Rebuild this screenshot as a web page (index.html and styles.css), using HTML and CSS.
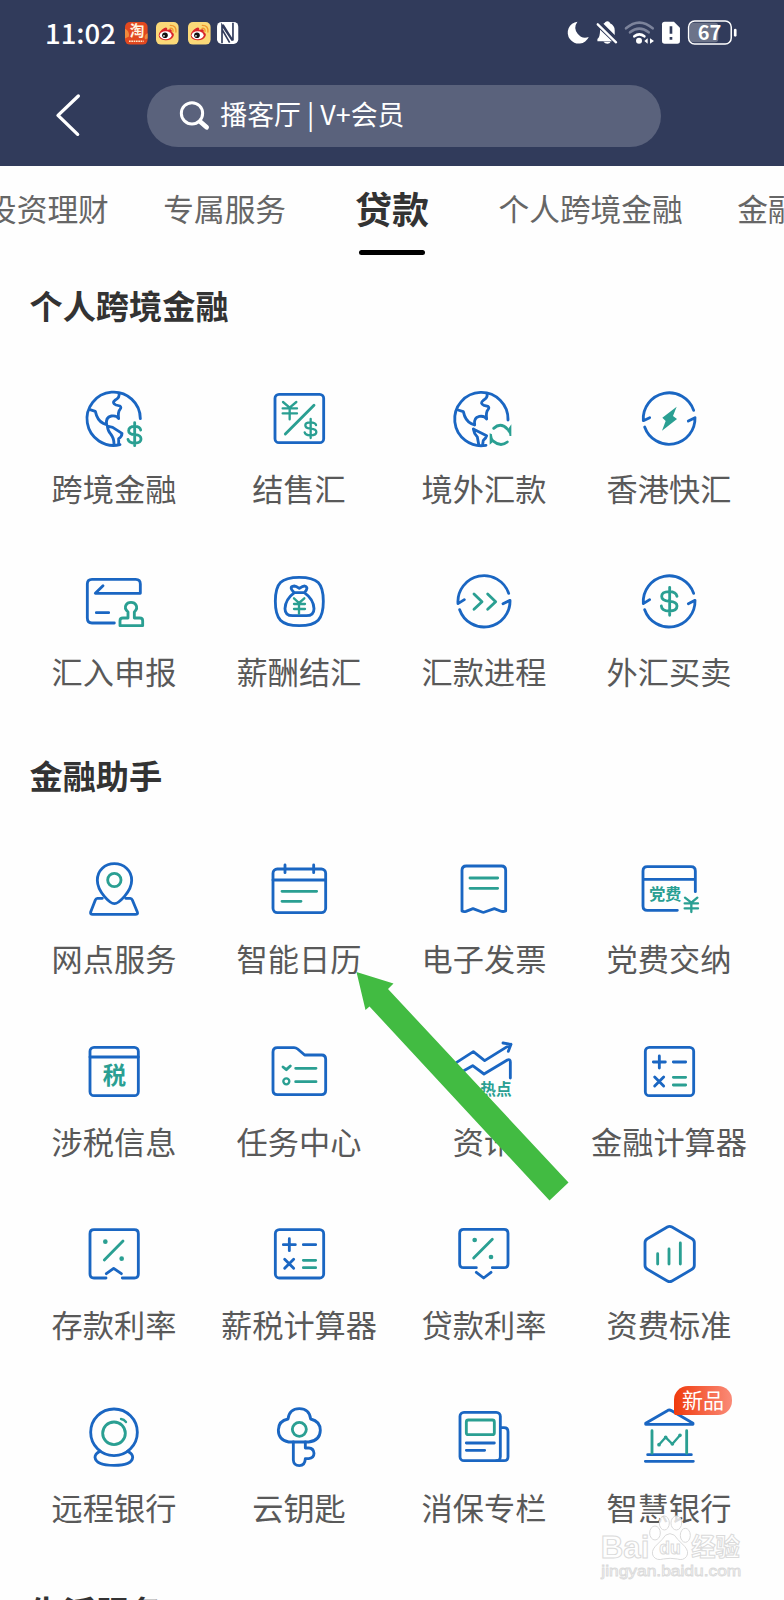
FILE: index.html
```
<!DOCTYPE html>
<html lang="zh-CN">
	<head>
		<meta charset="UTF-8">
		<title>全部服务</title>
		<link rel="stylesheet" href="styles.css">
	</head>
	<body>
		<div id="header">
			<div class="status">
				<span class="time">11:02</span>
				<svg class="app" viewBox="0 0 68 68">
					<rect width="68" height="68" rx="15" fill="#e2481f"/>
					<path d="M0 20 Q14 26 12 44 L0 50z M68 34 Q56 40 60 52 L68 50z" fill="#f08a3c"/>
					<text x="36" y="43" font-size="44" class="tao">淘</text>
					<path d="M12 58h44" stroke="#ffe9c9" stroke-width="5" stroke-dasharray="5 2"/>
				</svg>
				<svg class="app" viewBox="0 0 68 68">
					<rect width="68" height="68" rx="15" fill="#fbd978"/>
					<path d="M8 40 Q10 26 25 18 Q35 14 34 24 Q50 18 47 30 Q56 34 53 42 Q46 56 28 55 Q9 53 8 40z" fill="#d9252a"/>
					<ellipse cx="29" cy="40" rx="18" ry="12" fill="#fff"/>
					<circle cx="27" cy="40" r="8.500" fill="#111"/>
					<circle cx="24" cy="42" r="2.500" fill="#fff"/>
					<path d="M43 10 Q62 10 60 30 M42 19 Q53 18 51 28" fill="none" stroke="#f0962c" stroke-width="4" stroke-linecap="round"/>
				</svg>
				<svg class="app" viewBox="0 0 68 68">
					<rect width="68" height="68" rx="15" fill="#fbd978"/>
					<path d="M8 40 Q10 26 25 18 Q35 14 34 24 Q50 18 47 30 Q56 34 53 42 Q46 56 28 55 Q9 53 8 40z" fill="#d9252a"/>
					<ellipse cx="29" cy="40" rx="18" ry="12" fill="#fff"/>
					<circle cx="27" cy="40" r="8.500" fill="#111"/>
					<circle cx="24" cy="42" r="2.500" fill="#fff"/>
					<path d="M43 10 Q62 10 60 30 M42 19 Q53 18 51 28" fill="none" stroke="#f0962c" stroke-width="4" stroke-linecap="round"/>
				</svg>
				<svg class="nfc" viewBox="0 0 64 68">
					<rect width="64" height="66" rx="14" fill="#fff"/>
					<path d="M15 64V10L46 56M48 2V56M18 8L48 56M15 22L38 62" fill="none" stroke="#313b5b" stroke-width="5"/>
				</svg>
				<svg class="signals" viewBox="522 58 516 82">
					<path d="M556 66a33 33 0 1 0 34 46a30 30 0 0 1-34-46z" fill="#fff"/>
					<path d="M616 125V118Q624 112 624 90L660 125zM634 72Q638 70 640 67Q646 62 652 67L654 71Q668 78 668 92V106zM634 126h22q-3 6-10 6t-12-6z" fill="#fff"/>
					<path d="M617 74L672 128" stroke="#fff" stroke-width="7" stroke-linecap="round"/>
					<g fill="none" stroke-width="8" stroke-linecap="round">
						<path d="M702 86Q742 52 782 86M714 98Q742 76 770 98" stroke="#7c839b"/>
						<path d="M727 110Q742 98 757 110" stroke="#fff"/>
					</g>
					<circle cx="741" cy="123" r="9" fill="#fff"/>
					<path d="M757 124l10-8v16zM786 124l-12-8v16z" fill="#fff"/>
					<path d="M818 66h28l18 18v40q0 8-8 8h-38q-8 0-8-8V74q0-8 8-8z" fill="#fff"/>
					<path d="M837 80v22M837 112v8" stroke="#313b5b" stroke-width="8"/>
					<rect x="894" y="69" width="85" height="59" rx="10" fill="#6c7389"/>
					<rect x="890" y="64" width="128" height="69" rx="18" fill="none" stroke="#fff" stroke-width="4.500"/>
					<path d="M1030 91v16" stroke="#fff" stroke-width="8" stroke-linecap="round"/>
					<text x="953" y="122" class="percent">67</text>
				</svg>
			</div>
			<div class="nav">
				<svg class="back" viewBox="160 276 84 138"><path d="M233 288L172 346L231 403"/></svg>
				<div class="search">
					<svg viewBox="534 298 100 96"><circle cx="573" cy="338" r="32"/><path d="M598 363L617 380" stroke-width="14"/></svg>
					<span>播客厅 | V+会员</span>
				</div>
			</div>
		</div>
		<div id="tabs">
			<span>投资理财</span>
			<span>专属服务</span>
			<span class="on">贷款</span>
			<span>个人跨境金融</span>
			<span>金融助手</span>
		</div>

		<div class="section">
			<h2>个人跨境金融</h2>
			<ul>
				<li>
					<svg viewBox="114 39 216 216">
						<path d="M301 146A80 80 0 1 0 240 224"/>
						<path d="M237 70Q240 82 226 90Q214 99 228 105L240 108Q245 112 240 118Q233 126 236 146Q231 136 214 138Q196 142 200 164L190 160Q172 152 166 124L150 119M202 168L218 172L246 190Q246 200 236 206V222M202 168Q204 184 212 192Q222 204 222 222"/>
						<path class="g" d="M302 180Q300 169 285 169Q266 169 266 182Q266 193 285 194Q303 195 303 207Q303 219 285 219Q267 219 264 208M284 158V227"/>
					</svg>
					<p>跨境金融</p>
				</li>
				<li>
					<svg viewBox="669 39 216 216">
						<rect x="705" y="73" width="146" height="145" rx="12"/>
						<path class="g" d="M822 106L736 192"/>
						<path class="g thin" d="M729 96L749 113L769 96M728 115H771M728 130H771M749 113V148M828 165Q826 157 811 157Q796 157 796 166Q796 175 811 176Q829 177 829 186Q829 196 811 196Q796 196 794 187M812 147V204"/>
					</svg>
					<p>结售汇</p>
				</li>
				<li>
					<svg viewBox="144 39 216 216">
						<g transform="translate(24 1)">
							<path d="M300 149A80 80 0 1 0 234 225"/>
							<path d="M237 70Q240 82 226 90Q214 99 228 105L240 108Q245 112 240 118Q233 126 236 146Q231 136 214 138Q196 142 200 164L190 160Q172 152 166 124L150 119M196 176L206 181L236 196Q234 204 226 210L224 222M196 176Q198 190 208 200L212 222"/>
						</g>
						<path class="g" d="M281 175Q302 156 322 177M322 216Q302 232 281 214"/>
						<path class="gf" d="M334 163V198H328Q330 191 321 182zM269 190V224L283 212Q275 202 276 193z"/>
					</svg>
					<p>境外汇款</p>
				</li>
				<li>
					<svg viewBox="699 39 216 216">
						<path d="M881 121A77.700 77.700 0 0 0 730 152L749 143M734 171A77.700 77.700 0 0 0 885 143L865 153"/>
						<path class="gf" d="M830 110L787 143L797 153L786 182L831 147L819 138z"/>
					</svg>
					<p>香港快汇</p>
				</li>
				<li>
					<svg viewBox="114 588 216 216">
						<path d="M189 647L166 670H301V642Q301 628 287 628H156Q142 628 142 642V744Q142 759 156 759H223M169 728H206"/>
						<path class="g" d="M264 744V726Q252 715 258 705Q262 697 273 697Q284 697 288 705Q294 715 283 726V744H299Q308 744 308 752V767H240V752Q240 744 249 744H264z"/>
					</svg>
					<p>汇入申报</p>
				</li>
				<li>
					<svg viewBox="669 588 216 216">
						<path d="M778 622C833 622 850 640 850 694S833 767 778 767S706 748 706 694S723 622 778 622z"/>
						<path d="M763 668Q736 688 735 716Q735 737 758 737H799Q822 737 822 716Q821 688 793 668zM763 668Q744 650 763 648Q768 648 778 655Q788 648 794 648Q808 652 793 668"/>
						<path class="g thin" d="M762 685L777 699L793 685M762 702H795M762 717H795M777 699V731"/>
					</svg>
					<p>薪酬结汇</p>
				</li>
				<li>
					<svg viewBox="144 588 216 216">
						<path d="M326 670A78.200 78.200 0 0 0 174 701L193 689M179 719A77.700 77.700 0 0 0 330 691L309 701"/>
						<path class="g" d="M222 672L246 695L222 718M263 672L287 695L263 718"/>
					</svg>
					<p>汇款进程</p>
				</li>
				<li>
					<svg viewBox="699 588 216 216">
						<path d="M881 670A77.700 77.700 0 0 0 730 701L749 689M734 719A77.700 77.700 0 0 0 885 691L865 701"/>
						<path class="g" d="M831 679Q828 665 808 665Q785 665 785 679Q785 693 808 694Q831 695 831 708Q831 723 808 723Q785 723 784 708M809 652V736"/>
					</svg>
					<p>外汇买卖</p>
				</li>
			</ul>
		</div>

		<div class="section">
			<h2>金融助手</h2>
			<ul>
				<li>
					<svg viewBox="114 39 216 216">
						<path d="M223 191C211 191 172 156 172 121C172 91 195 71 223 71S275 91 275 121C275 156 235 191 223 191z"/>
						<path d="M187 175H172Q168 175 166 180L152 216Q150 223 158 223H286Q295 223 292 216L277 180Q275 175 271 175H257"/>
						<circle class="g" cx="223" cy="120" r="20"/>
					</svg>
					<p>网点服务</p>
				</li>
				<li>
					<svg viewBox="669 39 216 216">
						<rect x="699" y="87" width="158" height="131" rx="13"/>
						<path d="M699 120H857M735 75V98M821 75V98"/>
						<path class="g" d="M726 154H830M726 184H783"/>
					</svg>
					<p>智能日历</p>
				</li>
				<li>
					<svg viewBox="144 39 216 216">
						<path d="M186 213V91Q186 78 199 78H304Q317 78 317 91V213Q309 216 301 213L283 206L254 216Q250 218 246 216L219 206L198 214Q191 216 186 213z"/>
						<path class="g" d="M210 114H293M210 145H293"/>
					</svg>
					<p>电子发票</p>
				</li>
				<li>
					<svg viewBox="699 39 216 216">
						<path d="M886 155V93Q886 80 873 80H742Q729 80 729 93V198Q729 211 742 211H832M729 118H886"/>
						<text x="796" y="181" font-size="48">党费</text>
						<path class="g thin" d="M855 173L874 188L892 173M854 190H894M854 205H894M874 188V216"/>
					</svg>
					<p>党费交纳</p>
				</li>
				<li>
					<svg viewBox="114 588 216 216">
						<rect x="150" y="622" width="145" height="145" rx="12"/>
						<path d="M150 651H295"/>
						<text x="223" y="732" font-size="70">税</text>
					</svg>
					<p>涉税信息</p>
				</li>
				<li>
					<svg viewBox="669 588 216 216">
						<path d="M712 623H762Q768 623 773 627L794 645H845Q857 645 857 658V751Q857 764 844 764H712Q699 764 699 751V636Q699 623 712 623z"/>
						<path class="g" d="M729 681L739 689L751 678M767 685H828M767 725H828"/>
						<circle class="g thin" cx="739" cy="724" r="9"/>
					</svg>
					<p>任务中心</p>
				</li>
				<li>
					<svg viewBox="144 588 216 216">
						<path d="M170 667L220 635L254 662L333 613M309 609L333 613L325 634M170 704L218 677L252 702L322 660Q331 656 331 666V714"/>
						<text x="288" y="764" font-size="47">热点</text>
					</svg>
					<p>资讯</p>
				</li>
				<li>
					<svg viewBox="699 588 216 216">
						<rect x="736" y="622" width="145" height="145" rx="12"/>
						<path d="M760 666H796M778 648V684M820 666H857M764 711L791 738M791 711L764 738"/>
						<path class="g" d="M820 712H857M820 735H857"/>
					</svg>
					<p>金融计算器</p>
				</li>
				<li>
					<svg viewBox="114 57 216 216">
						<path d="M198 234H162Q150 234 150 222V101Q150 89 162 89H283Q295 89 295 101V222Q295 234 283 234H247M199 221L221 205L244 221"/>
						<path class="g" d="M249 123L193 180"/>
						<circle class="gf" cx="196" cy="125" r="7"/><circle class="gf" cx="245" cy="176" r="7"/>
					</svg>
					<p>存款利率</p>
				</li>
				<li>
					<svg viewBox="669 57 216 216">
						<rect x="706" y="89" width="145" height="145" rx="12"/>
						<path d="M730 134H766M748 116V152M790 134H827M734 178L761 205M761 178L734 205"/>
						<path class="g" d="M790 181H827M790 203H827"/>
					</svg>
					<p>薪税计算器</p>
				</li>
				<li>
					<svg viewBox="144 57 216 216">
						<path d="M229 203H191Q179 203 179 191V100Q179 88 191 88H312Q324 88 324 100V191Q324 203 312 203H277M229 217L251 234L273 217"/>
						<path class="g" d="M277 118L221 174"/>
						<circle class="gf" cx="224" cy="120" r="7"/><circle class="gf" cx="273" cy="171" r="7"/>
					</svg>
					<p>贷款利率</p>
				</li>
				<li>
					<svg viewBox="699 57 216 216">
						<path d="M802 81Q809 77 816 81L876 116Q883 120 883 128V196Q883 204 876 208L816 243Q809 247 802 243L742 208Q735 204 735 196V128Q735 120 742 116z"/>
						<path class="g" d="M773 161V192M807 147V192M841 129V192"/>
					</svg>
					<p>资费标准</p>
				</li>
				<li>
					<svg viewBox="114 606 216 216">
						<circle cx="222" cy="697" r="70"/>
						<path d="M180 754Q165 762 165 772Q168 796 222 796Q276 796 278 772Q278 762 263 754"/>
						<circle class="g" cx="222" cy="700" r="34"/>
						<path class="g thin" d="M243 657Q252 658 258 666"/>
					</svg>
					<p>远程银行</p>
				</li>
				<li>
					<svg viewBox="669 606 216 216">
						<path d="M746 726Q715 720 715 690Q716 662 744 657Q748 626 778 626Q808 626 812 657Q841 664 841 691Q840 722 806 726z"/>
						<path d="M760 726V780Q761 797 778 797Q795 797 796 776H806Q822 774 822 760Q821 745 806 744H796V726"/>
						<circle class="g" cx="778" cy="688" r="21"/>
					</svg>
					<p>云钥匙</p>
				</li>
				<li>
					<svg viewBox="144 606 216 216">
						<rect x="180" y="637" width="121" height="145" rx="12"/>
						<path d="M301 683H312Q324 683 324 695V770Q324 782 312 782H290M199 729H283M199 751H254"/>
						<rect class="g" x="199" y="660" width="84" height="44" rx="6"/>
					</svg>
					<p>消保专栏</p>
				</li>
				<li>
					<svg viewBox="699 606 216 216">
						<path d="M737 670L802 632Q808 628 815 632L879 670V673H737zM743 764H874M736 784H880"/>
						<path class="g" d="M756 692V760M860 692V760"/>
						<path class="g thin" d="M777 734L797 712L817 732L840 706"/>
						<path class="g dots" d="M777 734h.1M797 712h.1M817 732h.1M840 706h.1"/>
					</svg>
					<em>新品</em>
					<p>智慧银行</p>
				</li>
			</ul>
		</div>

		<div class="section">
			<h2>生活服务</h2>
		</div>

		<svg id="arrow" viewBox="356 972 214 230"><path d="M356.500 972L393.500 983.500L388 989L568.500 1182.500L549.500 1200.500L369.500 1006.500L365.500 1010z"/></svg>

		<svg id="mark" viewBox="600 940 430 214">
			<text x="602" y="1076" font-size="92" textLength="146" lengthAdjust="spacingAndGlyphs">Bai</text>
			<g>
				<ellipse cx="765" cy="1000" rx="16" ry="21"/>
				<ellipse cx="793" cy="970" rx="15" ry="21"/>
				<ellipse cx="829" cy="970" rx="16" ry="21"/>
				<ellipse cx="856" cy="1007" rx="15" ry="21"/>
				<path d="M810 1002Q824 1002 834 1020L854 1040Q868 1056 860 1070Q850 1084 832 1078Q810 1074 790 1078Q770 1084 760 1070Q752 1056 766 1040L786 1020Q796 1002 810 1002z"/>
			</g>
			<text x="778" y="1064" font-size="56" textLength="64" lengthAdjust="spacingAndGlyphs">du</text>
			<text x="874" y="1070" font-size="74" textLength="146" lengthAdjust="spacingAndGlyphs">经验</text>
			<text x="604" y="1130" font-size="44" textLength="420" lengthAdjust="spacingAndGlyphs" class="url">jingyan.baidu.com</text>
		</svg>
	</body>
</html>
```
FILE: styles.css
```
* {margin: 0; padding: 0; box-sizing: border-box;}
ul, li {list-style: none;}
body {
	position: relative;
	height: 1600px;
	overflow: hidden;
	background: #fefefe;
	font-family: "Noto Sans CJK SC", sans-serif;
}

/* 顶部 */
#header {
	height: 166px;
	background: #313b5b;
	color: #fff;
}
#header .status {
	display: flex;
	align-items: center;
	height: 66px;
	padding-left: 45px;
}
#header .status svg {overflow: visible;}
#header .time {
	width: 80px;
	padding-bottom: 2px;
	font-size: 27.500px;
	font-weight: 500;
	line-height: 40px;
}
#header .app {
	width: 22.6px; height: 22.6px;
	margin-right: 8.8px;
}
#header .nfc {
	width: 21.300px; height: 22.6px;
	margin-left: -2px;
}
#header .signals {
	width: 172px; height: 27.300px;
	margin-left: auto;
	margin-right: 46px;
}
.tao {
	fill: #fff3e0;
	font-weight: 700;
	text-anchor: middle;
}
.percent {
	fill: #fff;
	font: 700 60px "Noto Sans CJK SC", sans-serif;
	text-anchor: middle;
}
#header .nav {
	display: flex;
	align-items: center;
	height: 62px;
	margin-top: 19px;
	padding-left: 54px;
}
#header .back {
	width: 28px; height: 46px;
	margin-bottom: 2px;
	fill: none;
	stroke: #fff;
	stroke-width: 10;
	stroke-linecap: round;
	stroke-linejoin: round;
}
#header .search {
	display: flex;
	align-items: center;
	width: 514px; height: 62px;
	margin-left: 65px;
	padding-left: 32px;
	border-radius: 31px;
	background: #5a627c;
	font-size: 26.900px;
	white-space: pre;
}
#header .search svg {
	width: 33.300px; height: 32px;
	margin-right: 8px;
	fill: none;
	stroke: #fff;
	stroke-width: 9;
	stroke-linecap: round;
}
#header .search span {
	padding-bottom: 4px;
	line-height: 40px;
}

/* 分类 */
#tabs {
	display: flex;
	height: 90px;
	margin-left: -14px;
	gap: 54.500px;
	line-height: 84px;
	font-size: 30.700px;
	color: #666;
	white-space: nowrap;
	overflow: hidden;
}
#tabs span {flex: none;}
#tabs .on {
	position: relative;
	margin: 0 15px 0 14.500px;
	font-size: 37px;
	font-weight: 700;
	color: #333;
}
#tabs .on::after {
	content: "";
	position: absolute;
	left: 3.500px; top: 84px;
	width: 66px; height: 5px;
	border-radius: 3px;
	background: #000;
}

/* 服务列表 */
.section {padding: 24px 22px 10px;}
.section h2 {
	height: 50px;
	margin-bottom: 20px;
	padding-left: 7.500px;
	line-height: 50px;
	font-size: 33.200px;
	font-weight: 700;
	color: #333;
}
.section ul {
	display: grid;
	grid-template-columns: repeat(4, 185px);
	grid-auto-rows: 183px;
}
.section li {
	position: relative;
	display: flex;
	flex-direction: column;
	align-items: center;
	gap: 13px;
	padding: 33px 1px 0 0;
}
.section li svg {
	width: 72px; height: 72px;
	fill: none;
	stroke: #1a66c2;
	stroke-width: 8.500;
	stroke-linecap: round;
	stroke-linejoin: round;
}
.section li svg .g {stroke: #2a9f92;}
.section li svg .thin {stroke-width: 7;}
.section li svg .dots {stroke-width: 11;}
.section li svg .gf {fill: #2a9f92; stroke: none;}
.section li svg text {
	fill: #2a9f92;
	stroke: none;
	font-weight: 700;
	text-anchor: middle;
}
.section li p {
	line-height: 40px;
	font-size: 31.200px;
	color: #595959;
	white-space: nowrap;
}
.section li em {
	position: absolute;
	left: 97px; top: 17px;
	width: 58px; height: 29px;
	border-radius: 14px 14px 14px 2px;
	background: linear-gradient(90deg, #f03a0c, #fa8b78);
	color: #fff;
	font-size: 21px;
	font-style: normal;
	line-height: 27px;
	text-align: center;
}

/* 箭头和水印 */
#arrow {
	position: absolute;
	left: 356px; top: 972px;
	width: 214px; height: 230px;
	fill: #42bb42;
}
#mark {
	position: absolute;
	left: 600px; top: 1513.300px;
	width: 143.300px; height: 71.300px;
	fill: rgba(255, 255, 255, .8);
	stroke: #dadada;
	stroke-width: 3;
	font-family: "Liberation Sans", "Noto Sans CJK SC", sans-serif;
	font-weight: 700;
}
#mark .url {
	font-weight: 400;
	stroke-width: 2.500;
}
```
